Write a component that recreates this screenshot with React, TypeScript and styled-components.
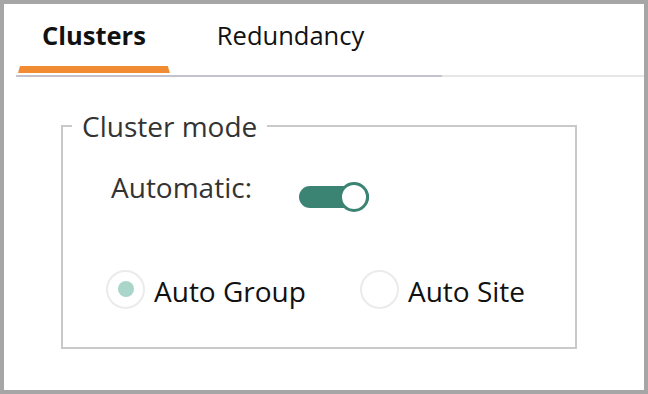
import { FC, useState } from 'react';
import styled, { createGlobalStyle } from 'styled-components';

const GlobalStyle = createGlobalStyle`
  html, body {
    margin: 0;
    padding: 0;
    background: #a6a6a6;
  }

  body {
    font-family: 'Open Sans', 'Noto Sans', sans-serif;
  }

  * {
    box-sizing: border-box;
  }
`;

const teal = '#3b8373';

const Panel = styled.div`
  margin: 4px;
  width: 640px;
  height: 386px;
  background: #ffffff;
  display: flex;
  flex-direction: column;
`;

const TabBar = styled.div`
  display: flex;
  align-items: flex-end;
  padding-left: 12px;
`;

const TabList = styled.div`
  display: flex;
  gap: 23px;
  width: 426px;
  padding-left: 2px;
  border-bottom: 2px solid #c4c2cc;
`;

const TabRest = styled.div`
  flex: 1;
  border-bottom: 2px solid #e6e6e6;
`;

const Tab = styled.button<{ active?: boolean }>`
  display: flex;
  flex-direction: column;
  align-items: stretch;
  background: none;
  border: none;
  padding: 14px 0 2px;
  margin: 0;
  font-family: inherit;
  font-size: 25.5px;
  line-height: 35px;
  font-weight: ${({ active }) => (active ? 700 : 400)};
  color: #111111;
  cursor: pointer;
`;

const TabLabel = styled.span`
  padding: 0 24px;
`;

const TabIndicator = styled.span<{ active?: boolean }>`
  display: block;
  height: 7px;
  margin-top: 13px;
  background: ${({ active }) => (active ? '#f28c33' : 'transparent')};
  clip-path: polygon(2px 0, calc(100% - 2px) 0, 100% 100%, 0 100%);
`;

const Content = styled.div`
  padding: 30px 0 0 57px;
`;

const Fieldset = styled.fieldset`
  width: 516px;
  height: 242px;
  margin: 0;
  padding: 0;
  border: 2px solid #c9c9cc;
  display: flex;
  flex-direction: column;
`;

const Legend = styled.legend`
  margin-left: 9px;
  padding: 0 10px;
  font-size: 28px;
  line-height: normal;
  color: #333333;
`;

const SettingRow = styled.div`
  display: flex;
  align-items: center;
  gap: 47px;
  padding: 21px 0 0 48px;
`;

const SettingLabel = styled.span`
  font-size: 28px;
  line-height: normal;
  color: #333333;
`;

const SwitchTrack = styled.button<{ on: boolean }>`
  position: relative;
  width: 70px;
  height: 22px;
  margin-top: 20px;
  padding: 0;
  border: none;
  border-radius: 11px;
  background: ${({ on }) => (on ? teal : '#c4c4c4')};
  cursor: pointer;
`;

const SwitchKnob = styled.span<{ on: boolean }>`
  position: absolute;
  top: -4px;
  ${({ on }) => (on ? 'right: 0;' : 'left: 0;')}
  width: 30px;
  height: 30px;
  border-radius: 50%;
  background: #ffffff;
  border: 3.5px solid ${({ on }) => (on ? teal : '#c4c4c4')};
`;

const RadioGroup = styled.div`
  display: flex;
  align-items: center;
  gap: 54px;
  padding: 64px 0 0 43px;
`;

const RadioOption = styled.label`
  display: flex;
  align-items: center;
  gap: 9px;
  font-size: 28px;
  line-height: normal;
  color: #111111;
  cursor: pointer;
`;

const RadioCircle = styled.span<{ checked: boolean }>`
  display: flex;
  align-items: center;
  justify-content: center;
  width: 39px;
  height: 39px;
  margin-top: -4px;
  border-radius: 50%;
  border: 2px solid #ebebeb;
  background: #ffffff;

  &::after {
    content: '';
    width: 16px;
    height: 16px;
    border-radius: 50%;
    background: ${({ checked }) => (checked ? '#a9d6c9' : 'transparent')};
  }
`;

const tabs = ['Clusters', 'Redundancy'];
const modes = ['Auto Group', 'Auto Site'];

const App: FC = () => {
  const [activeTab, setActiveTab] = useState('Clusters');
  const [automatic, setAutomatic] = useState(true);
  const [mode, setMode] = useState('Auto Group');

  return (
    <>
      <GlobalStyle />
      <Panel>
        <TabBar>
          <TabList>
            {tabs.map((tab) => (
              <Tab key={tab} active={tab === activeTab} onClick={() => setActiveTab(tab)}>
                <TabLabel>{tab}</TabLabel>
                <TabIndicator active={tab === activeTab} />
              </Tab>
            ))}
          </TabList>
          <TabRest />
        </TabBar>

        <Content>
          <Fieldset>
            <Legend>Cluster mode</Legend>
            <SettingRow>
              <SettingLabel>Automatic:</SettingLabel>
              <SwitchTrack on={automatic} onClick={() => setAutomatic(!automatic)} aria-label="Automatic">
                <SwitchKnob on={automatic} />
              </SwitchTrack>
            </SettingRow>
            <RadioGroup>
              {modes.map((m) => (
                <RadioOption key={m} onClick={() => setMode(m)}>
                  <RadioCircle checked={m === mode} />
                  {m}
                </RadioOption>
              ))}
            </RadioGroup>
          </Fieldset>
        </Content>
      </Panel>
    </>
  );
};

export default App;
